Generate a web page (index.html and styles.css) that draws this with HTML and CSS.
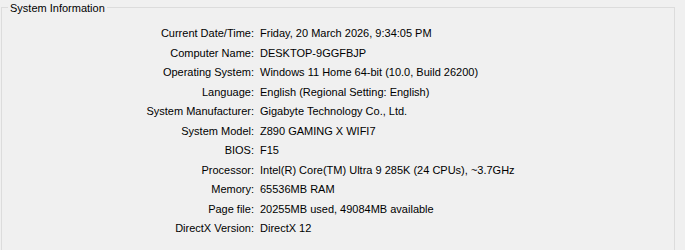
FILE: index.html
```html
<!DOCTYPE html>
<html lang="en">
<head>
    <meta charset="UTF-8">
    <meta name="viewport" content="width=device-width, initial-scale=1.0">
    <title>System Information</title>
    <link rel="stylesheet" href="styles.css">
</head>
<body>
    <fieldset class="group">
        <legend>System Information</legend>
        <div class="info-grid">
            <span class="label">Current Date/Time:</span><span class="value">Friday, 20 March 2026, 9:34:05 PM</span>
            <span class="label">Computer Name:</span><span class="value">DESKTOP-9GGFBJP</span>
            <span class="label">Operating System:</span><span class="value">Windows 11 Home 64-bit (10.0, Build 26200)</span>
            <span class="label">Language:</span><span class="value">English (Regional Setting: English)</span>
            <span class="label">System Manufacturer:</span><span class="value">Gigabyte Technology Co., Ltd.</span>
            <span class="label">System Model:</span><span class="value">Z890 GAMING X WIFI7</span>
            <span class="label">BIOS:</span><span class="value">F15</span>
            <span class="label">Processor:</span><span class="value">Intel(R) Core(TM) Ultra 9 285K (24 CPUs), ~3.7GHz</span>
            <span class="label">Memory:</span><span class="value">65536MB RAM</span>
            <span class="label">Page file:</span><span class="value">20255MB used, 49084MB available</span>
            <span class="label">DirectX Version:</span><span class="value">DirectX 12</span>
        </div>
    </fieldset>
</body>
</html>
```

FILE: styles.css
```css
body { margin: 0; background-color: #f0f0f0; font-family: "Liberation Sans", Arial, sans-serif; font-size: 11px; color: #000; }
.group { width: 672px; margin: 0 0 0 1px; padding: 9px 0 20px 0; border: 1px solid #dcdcdc; box-sizing: content-box; }
.group legend { margin-left: 6px; padding: 2px 2px 0 2px; line-height: 13px; }
.info-grid { display: grid; grid-template-columns: 252px auto; column-gap: 6px; line-height: 19.5px; }
.info-grid .label { text-align: right; }
.info-grid .value { white-space: nowrap; }
```
